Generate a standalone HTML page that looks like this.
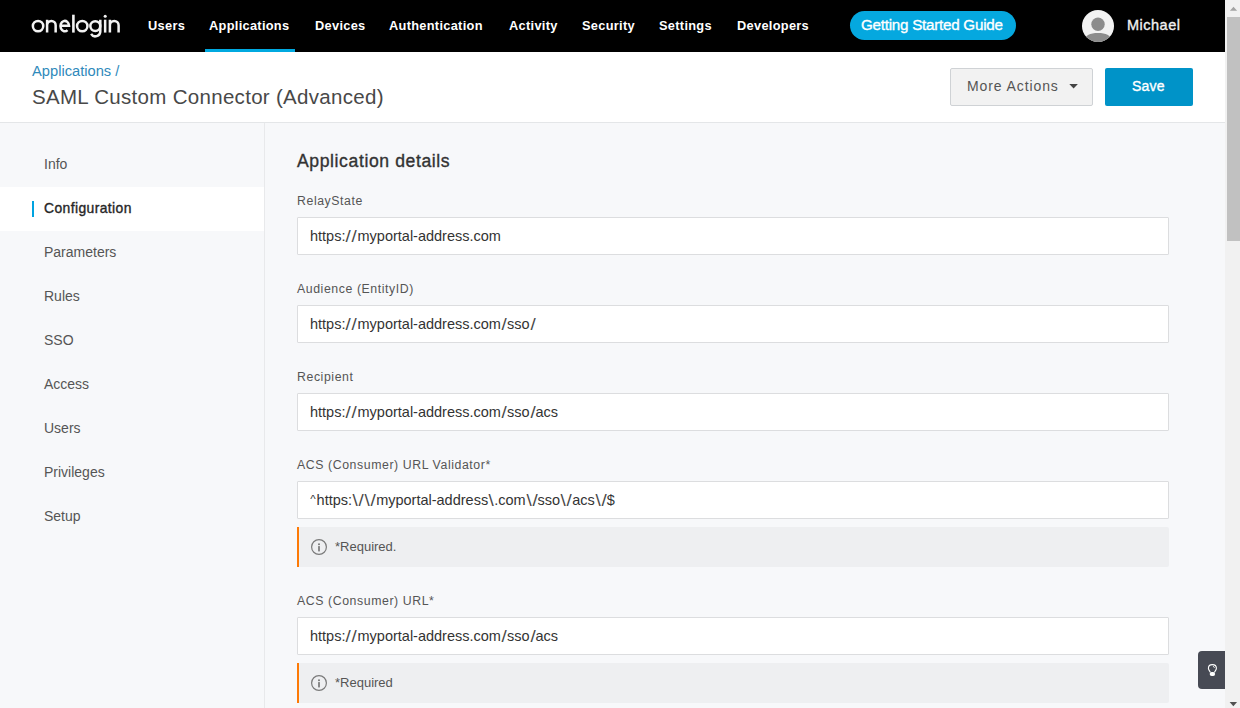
<!DOCTYPE html>
<html>
<head>
<meta charset="utf-8">
<style>
*{box-sizing:border-box;margin:0;padding:0}
html,body{width:1240px;height:708px;overflow:hidden;background:#f7f8fa}
body{position:relative;font-family:"Liberation Sans",sans-serif;color:#333}
.a{position:absolute;white-space:nowrap}
#hdr{position:absolute;left:0;top:0;width:1225px;height:52px;background:#000}
.nav{position:absolute;top:18px;font-size:12.8px;letter-spacing:0.3px;font-weight:bold;color:#fff;line-height:16px}
#uline{position:absolute;left:205px;top:49px;width:90px;height:3px;background:#00a9e0}
#pill{position:absolute;left:850px;top:11px;width:166px;height:29px;border-radius:15px;background:#05a8df}
#ph{position:absolute;left:0;top:52px;width:1225px;height:71px;background:#fff;border-bottom:1px solid #e4e6e8}
#side{position:absolute;left:0;top:123px;width:265px;height:585px;background:#f7f8fa;border-right:1px solid #e8e9eb}
.si{position:absolute;left:44px;font-size:14px;color:#555;line-height:16px}
.lbl{position:absolute;left:297px;font-size:12.3px;letter-spacing:0.58px;color:#555;line-height:16px}
.inp{position:absolute;left:297px;width:872px;height:38px;background:#fff;border:1px solid #dcdddf;border-radius:1px}
.inp span{position:absolute;left:12px;top:10px;font-size:14.5px;color:#333;line-height:17px;white-space:nowrap}
.note{position:absolute;left:297px;width:872px;height:40px;background:#eeeff1;border-left:2px solid #fd7a06;border-radius:0 2px 2px 0}
.note span{position:absolute;left:36px;top:12px;font-size:13px;color:#555;line-height:16px}
.note svg{position:absolute;left:11px;top:11px}
.sl{font-style:normal;display:inline-block;width:6.03px;text-align:center;transform:scale(1.3,1.1);transform-origin:50% 30%;color:#4a4a4a}
#sb{position:absolute;left:1225px;top:0;width:15px;height:708px;background:#f1f1f1}
</style>
</head>
<body>
<div id="hdr">
  <svg class="a" style="left:0;top:0" width="130" height="52" viewBox="0 0 130 52"><g fill="none" stroke="#f2f2f2" stroke-width="2.5">
    <circle cx="38.05" cy="26.1" r="5.2"/>
    <path d="M47.1 32.6V19.7M47.1 25.2A4.275 4.275 0 0 1 55.65 25.2V32.6"/>
    <path d="M60.45 25.8H69.05A4.3 5.2 0 1 0 67.5 30.1"/>
    <path d="M73.4 14.7V32.6" stroke-width="2.6"/>
    <circle cx="82.25" cy="26.1" r="5.2"/>
    <circle cx="95.3" cy="26.1" r="4.95"/>
    <path d="M100.3 19.7V31.3A4.95 4.95 0 0 1 91.1 33.9"/>
    <path d="M105.15 19.7V32.6"/>
    <path d="M109.9 32.6V19.7M109.9 25.3A4.35 4.35 0 0 1 118.6 25.3V32.6"/>
  </g><circle cx="105.2" cy="16.3" r="1.55" fill="#f2f2f2"/></svg>
  <div class="nav" style="left:148px">Users</div>
  <div class="nav" style="left:209px">Applications</div>
  <div class="nav" style="left:315px">Devices</div>
  <div class="nav" style="left:389px">Authentication</div>
  <div class="nav" style="left:509px">Activity</div>
  <div class="nav" style="left:582px">Security</div>
  <div class="nav" style="left:659px">Settings</div>
  <div class="nav" style="left:737px">Developers</div>
  <div id="uline"></div>
  <div id="pill"><div class="a" style="left:11px;top:5px;font-size:15.2px;-webkit-text-stroke:0.35px #fff;color:#fff;line-height:17px;letter-spacing:-0.25px">Getting Started Guide</div></div>
  <svg class="a" style="left:1082px;top:10px" width="32" height="32" viewBox="0 0 32 32">
    <defs><clipPath id="cc"><circle cx="16" cy="16" r="16"/></clipPath></defs>
    <circle cx="16" cy="16" r="16" fill="#f2f2f2"/>
    <g clip-path="url(#cc)" fill="#8c8c8c">
      <circle cx="16" cy="14.3" r="6.7"/>
      <path d="M3 34V29.5C3 25.5 8 23 16 23C24 23 29 25.5 29 29.5V34Z"/>
    </g>
  </svg>
  <div class="a" style="left:1127px;top:17px;font-size:14.5px;letter-spacing:0.5px;-webkit-text-stroke:0.35px #f0f0f0;color:#f0f0f0;line-height:16px">Michael</div>
</div>

<div id="ph">
  <div class="a" style="left:32px;top:11px;font-size:14.7px;color:#2f8abb;line-height:17px">Applications /</div>
  <div class="a" style="left:32px;top:33px;font-size:20.5px;color:#484848;line-height:24px;letter-spacing:0.3px">SAML Custom Connector (Advanced)</div>
  <div class="a" style="left:950px;top:16px;width:143px;height:38px;background:#f2f2f2;border:1px solid #cfd2d5;border-radius:2px">
    <div class="a" style="left:16px;top:9px;font-size:14px;color:#555;line-height:17px;letter-spacing:0.9px">More Actions</div>
    <svg class="a" style="left:118px;top:15px" width="10" height="6" viewBox="0 0 10 6"><path d="M0.3 0.1H8.9L4.6 4.6Z" fill="#444"/></svg>
  </div>
  <div class="a" style="left:1105px;top:16px;width:88px;height:38px;background:#0093c8;border-radius:2px">
    <div class="a" style="left:27px;top:10px;font-size:14px;letter-spacing:0.2px;-webkit-text-stroke:0.35px #fff;color:#fff;line-height:17px">Save</div>
  </div>
</div>

<div id="side">
  <div class="si" style="top:33px">Info</div>
  <div class="a" style="left:0;top:64px;width:264px;height:44px;background:#fff"></div>
  <div class="a" style="left:32px;top:78px;width:2px;height:16px;background:#00a3e0"></div>
  <div class="si" style="top:77px;letter-spacing:0.4px;-webkit-text-stroke:0.35px #262626;color:#262626;font-size:13.9px">Configuration</div>
  <div class="si" style="top:121px">Parameters</div>
  <div class="si" style="top:165px">Rules</div>
  <div class="si" style="top:209px">SSO</div>
  <div class="si" style="top:253px">Access</div>
  <div class="si" style="top:297px">Users</div>
  <div class="si" style="top:341px">Privileges</div>
  <div class="si" style="top:385px">Setup</div>
</div>

<div class="a" style="left:297px;top:151px;font-size:17.6px;letter-spacing:0.6px;-webkit-text-stroke:0.35px #333;color:#333;line-height:20px">Application details</div>

<div class="lbl" style="top:193px">RelayState</div>
<div class="inp" style="top:217px"><span>https:<i class="sl">/</i><i class="sl">/</i>myportal-address.com</span></div>

<div class="lbl" style="top:281px">Audience (EntityID)</div>
<div class="inp" style="top:305px"><span>https:<i class="sl">/</i><i class="sl">/</i>myportal-address.com<i class="sl">/</i>sso<i class="sl">/</i></span></div>

<div class="lbl" style="top:369px">Recipient</div>
<div class="inp" style="top:393px"><span>https:<i class="sl">/</i><i class="sl">/</i>myportal-address.com<i class="sl">/</i>sso<i class="sl">/</i>acs</span></div>

<div class="lbl" style="top:457px">ACS (Consumer) URL Validator*</div>
<div class="inp" style="top:481px"><span><i style="font-style:normal;display:inline-block;width:6.6px;transform:scale(0.8,0.72);transform-origin:15% 25%">^</i>https:<i class="sl">\</i><i class="sl">/</i><i class="sl">\</i><i class="sl">/</i>myportal-address<i class="sl">\</i>.com<i class="sl">\</i><i class="sl">/</i>sso<i class="sl">\</i><i class="sl">/</i>acs<i class="sl">\</i><i class="sl">/</i>$</span></div>
<div class="note" style="top:527px">
  <svg width="18" height="18" viewBox="0 0 18 18"><circle cx="9" cy="9" r="7.4" fill="none" stroke="#7a7a7a" stroke-width="1.2"/><rect x="8.2" y="8.1" width="1.6" height="5.3" fill="#707070"/><circle cx="9" cy="6.3" r="0.95" fill="#707070"/></svg>
  <span>*Required.</span>
</div>

<div class="lbl" style="top:593px">ACS (Consumer) URL*</div>
<div class="inp" style="top:617px"><span>https:<i class="sl">/</i><i class="sl">/</i>myportal-address.com<i class="sl">/</i>sso<i class="sl">/</i>acs</span></div>
<div class="note" style="top:663px">
  <svg width="18" height="18" viewBox="0 0 18 18"><circle cx="9" cy="9" r="7.4" fill="none" stroke="#7a7a7a" stroke-width="1.2"/><rect x="8.2" y="8.1" width="1.6" height="5.3" fill="#707070"/><circle cx="9" cy="6.3" r="0.95" fill="#707070"/></svg>
  <span>*Required</span>
</div>

<div class="a" style="left:1198px;top:651px;width:27px;height:38px;background:#474a54;border-radius:4px 0 0 4px">
  <svg class="a" style="left:8px;top:12px" width="13" height="15" viewBox="0 0 13 15"><path d="M4.4 9.4C4.2 8.3 2.4 7.3 2.4 5.3C2.4 3 4.2 1.6 6.4 1.6C8.6 1.6 10.4 3 10.4 5.3C10.4 7.3 8.6 8.3 8.4 9.4" fill="none" stroke="#fff" stroke-width="1.1"/><rect x="3.7" y="9" width="5.4" height="4.1" rx="2" fill="#fff"/><path d="M6.9 3.2A2.2 2.2 0 0 1 8.5 4.9" fill="none" stroke="#fff" stroke-width="0.8"/></svg>
</div>

<div id="sb">
  <svg class="a" style="left:0;top:0" width="15" height="17" viewBox="0 0 15 17"><path d="M4.9 10.8H12.1L8.5 6.8Z" fill="#a3a3a3"/></svg>
  <div class="a" style="left:2px;top:17px;width:13px;height:224px;background:#c1c1c1"></div>
  <svg class="a" style="left:0;top:698px" width="15" height="10" viewBox="0 0 15 10"><path d="M4.6 4H12.1L8.35 8.2Z" fill="#505050"/></svg>
</div>
</body>
</html>
